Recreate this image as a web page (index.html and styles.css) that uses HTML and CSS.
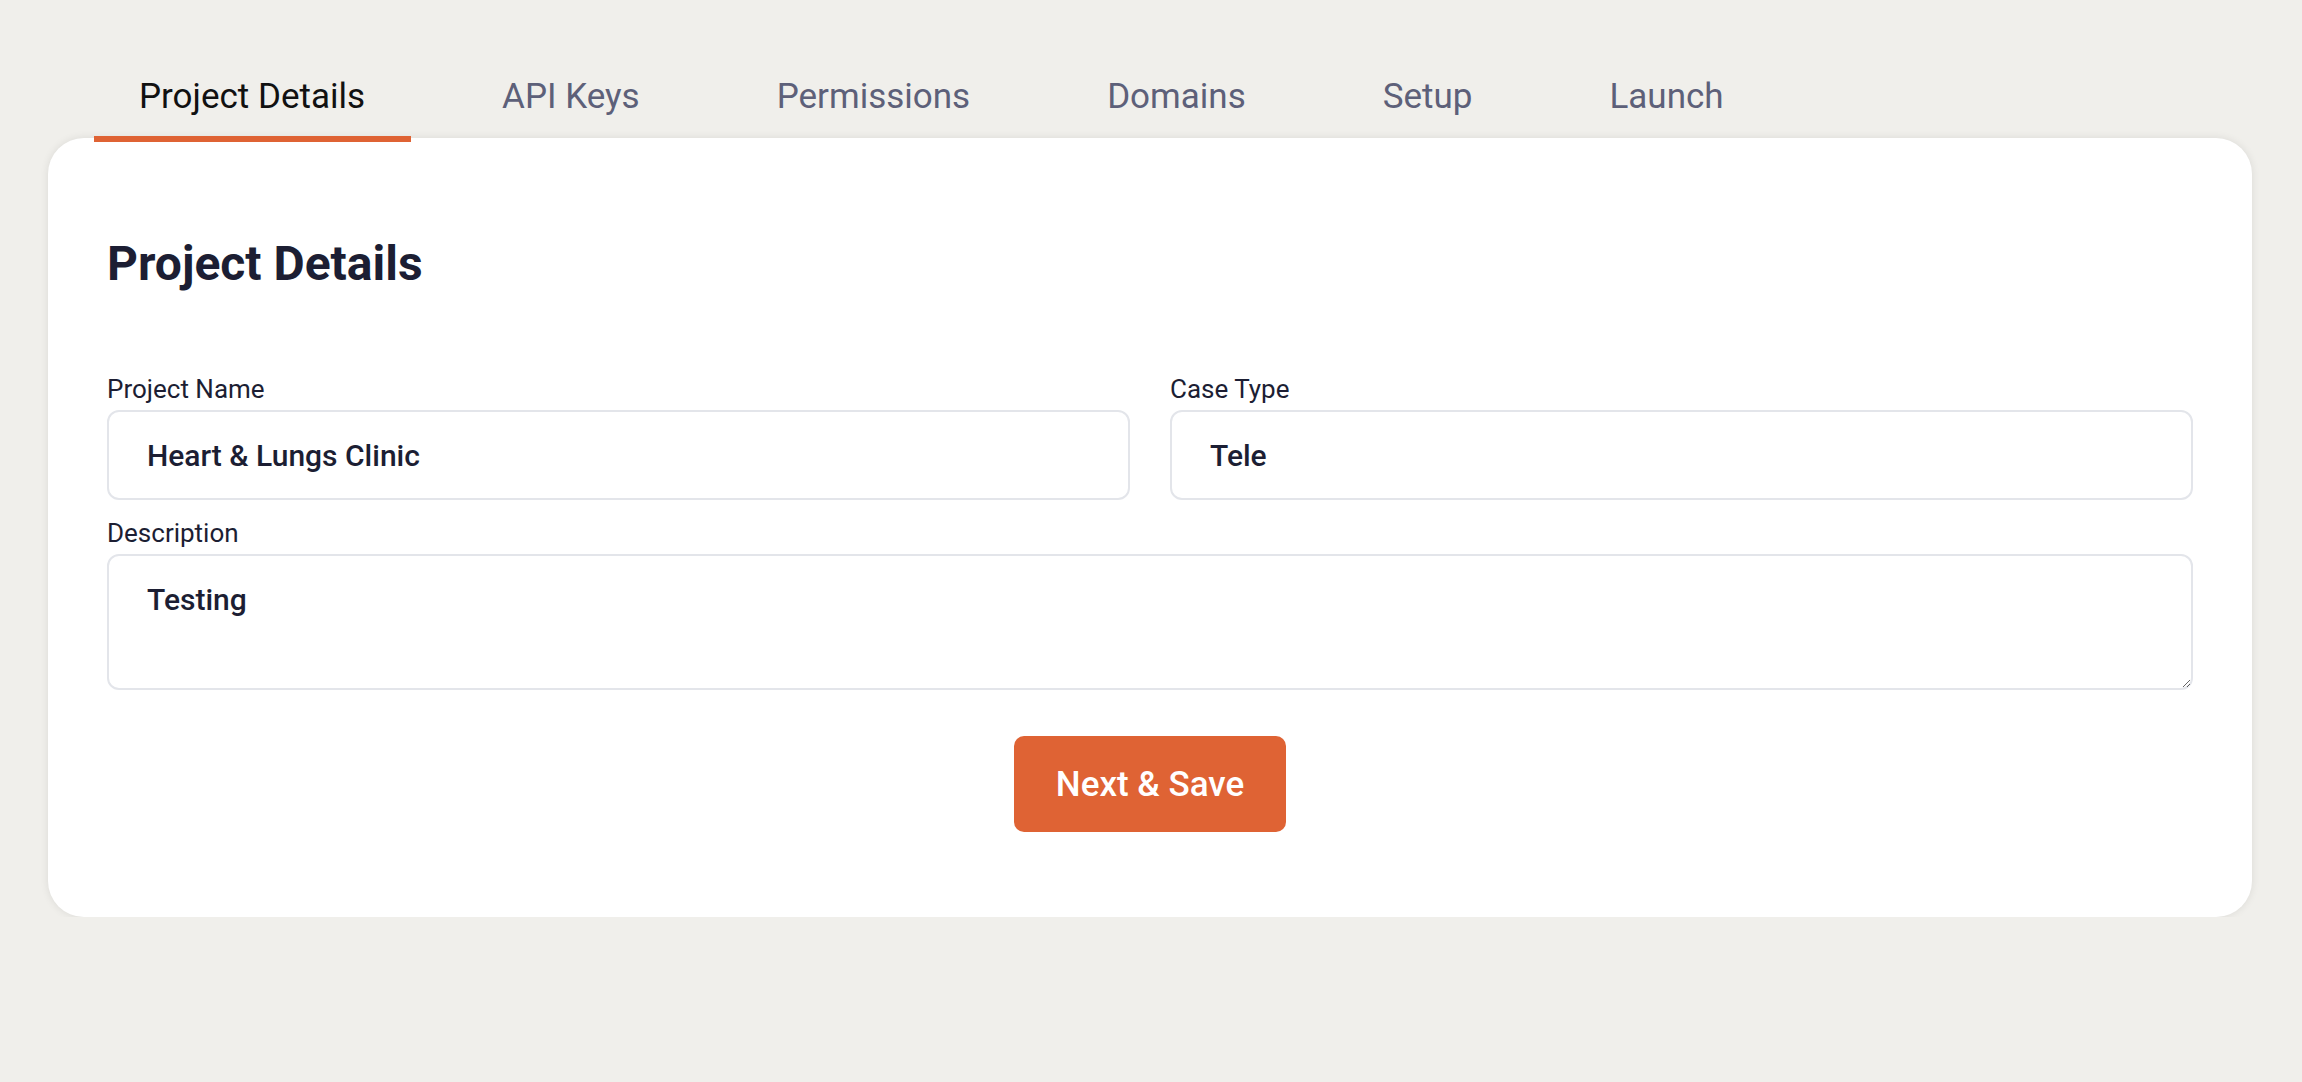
FILE: index.html
```html
<!DOCTYPE html>
<html lang="en">
<head>
<meta charset="utf-8">
<title>Project Details</title>
<link rel="stylesheet" href="styles.css">
</head>
<body>
<div class="page">
  <nav class="tabs">
    <div class="tab active">Project Details</div>
    <div class="tab">API Keys</div>
    <div class="tab">Permissions</div>
    <div class="tab">Domains</div>
    <div class="tab">Setup</div>
    <div class="tab">Launch</div>
  </nav>
  <section class="card">
    <h1 class="title">Project Details</h1>
    <div class="row">
      <div class="field">
        <label class="label" for="pname">Project Name</label>
        <input class="input" id="pname" type="text" value="Heart &amp; Lungs Clinic">
      </div>
      <div class="field">
        <label class="label" for="ctype">Case Type</label>
        <input class="input" id="ctype" type="text" value="Tele">
      </div>
    </div>
    <div class="field">
      <label class="label" for="desc">Description</label>
      <textarea class="input textarea" id="desc">Testing</textarea>
    </div>
    <div class="actions">
      <button class="btn" type="button">Next &amp; Save</button>
    </div>
  </section>
</div>
</body>
</html>
```

FILE: styles.css
```css
* { box-sizing: border-box; }

html, body {
  margin: 0;
  padding: 0;
  background: #f0efeb;
  font-family: Roboto, "Liberation Sans", Arial, sans-serif;
}

.page {
  padding: 56px 50px 0 48px;
}

.tabs {
  display: flex;
  gap: 45px;
  margin-left: 45px;
  position: relative;
  z-index: 1;
}

.tab {
  position: relative;
  padding: 20px 46px;
  font-size: 35px;
  line-height: 41px;
  color: #5d6079;
  white-space: nowrap;
}

.tab.active {
  color: #111111;
}

.tab.active::after {
  content: "";
  position: absolute;
  left: 1px;
  right: 0;
  bottom: -5px;
  height: 6px;
  background: #df6334;
}

.card {
  margin-top: 1px;
  background: #ffffff;
  border-radius: 36px;
  box-shadow: 0 0 8px rgba(0, 0, 0, 0.09);
  padding: 98px 59px 85px;
}

.title {
  margin: 0 0 82px;
  font-size: 48px;
  line-height: 56px;
  font-weight: 700;
  color: #1c1e33;
}

.row {
  display: grid;
  grid-template-columns: 1fr 1fr;
  gap: 40px;
  margin-bottom: 18px;
}

.field {
  display: flex;
  flex-direction: column;
}

.label {
  font-size: 26px;
  line-height: 30px;
  margin-bottom: 6px;
  color: #1c1e33;
}

.input {
  height: 90px;
  border: 2px solid #e3e5ea;
  border-radius: 12px;
  padding: 0 38px;
  font-family: Roboto, "Liberation Sans", Arial, sans-serif;
  font-size: 30px;
  font-weight: 500;
  color: #1c1e33;
  background: #ffffff;
  outline: none;
}

.textarea {
  height: 136px;
  padding: 26px 38px;
  line-height: 35px;
  resize: vertical;
}

.actions {
  display: flex;
  justify-content: center;
  margin-top: 46px;
}

.btn {
  height: 96px;
  padding: 0 42px;
  border: none;
  border-radius: 10px;
  background: #df6334;
  color: #ffffff;
  font-family: Roboto, "Liberation Sans", Arial, sans-serif;
  font-size: 35px;
  font-weight: 500;
  cursor: pointer;
}
```
